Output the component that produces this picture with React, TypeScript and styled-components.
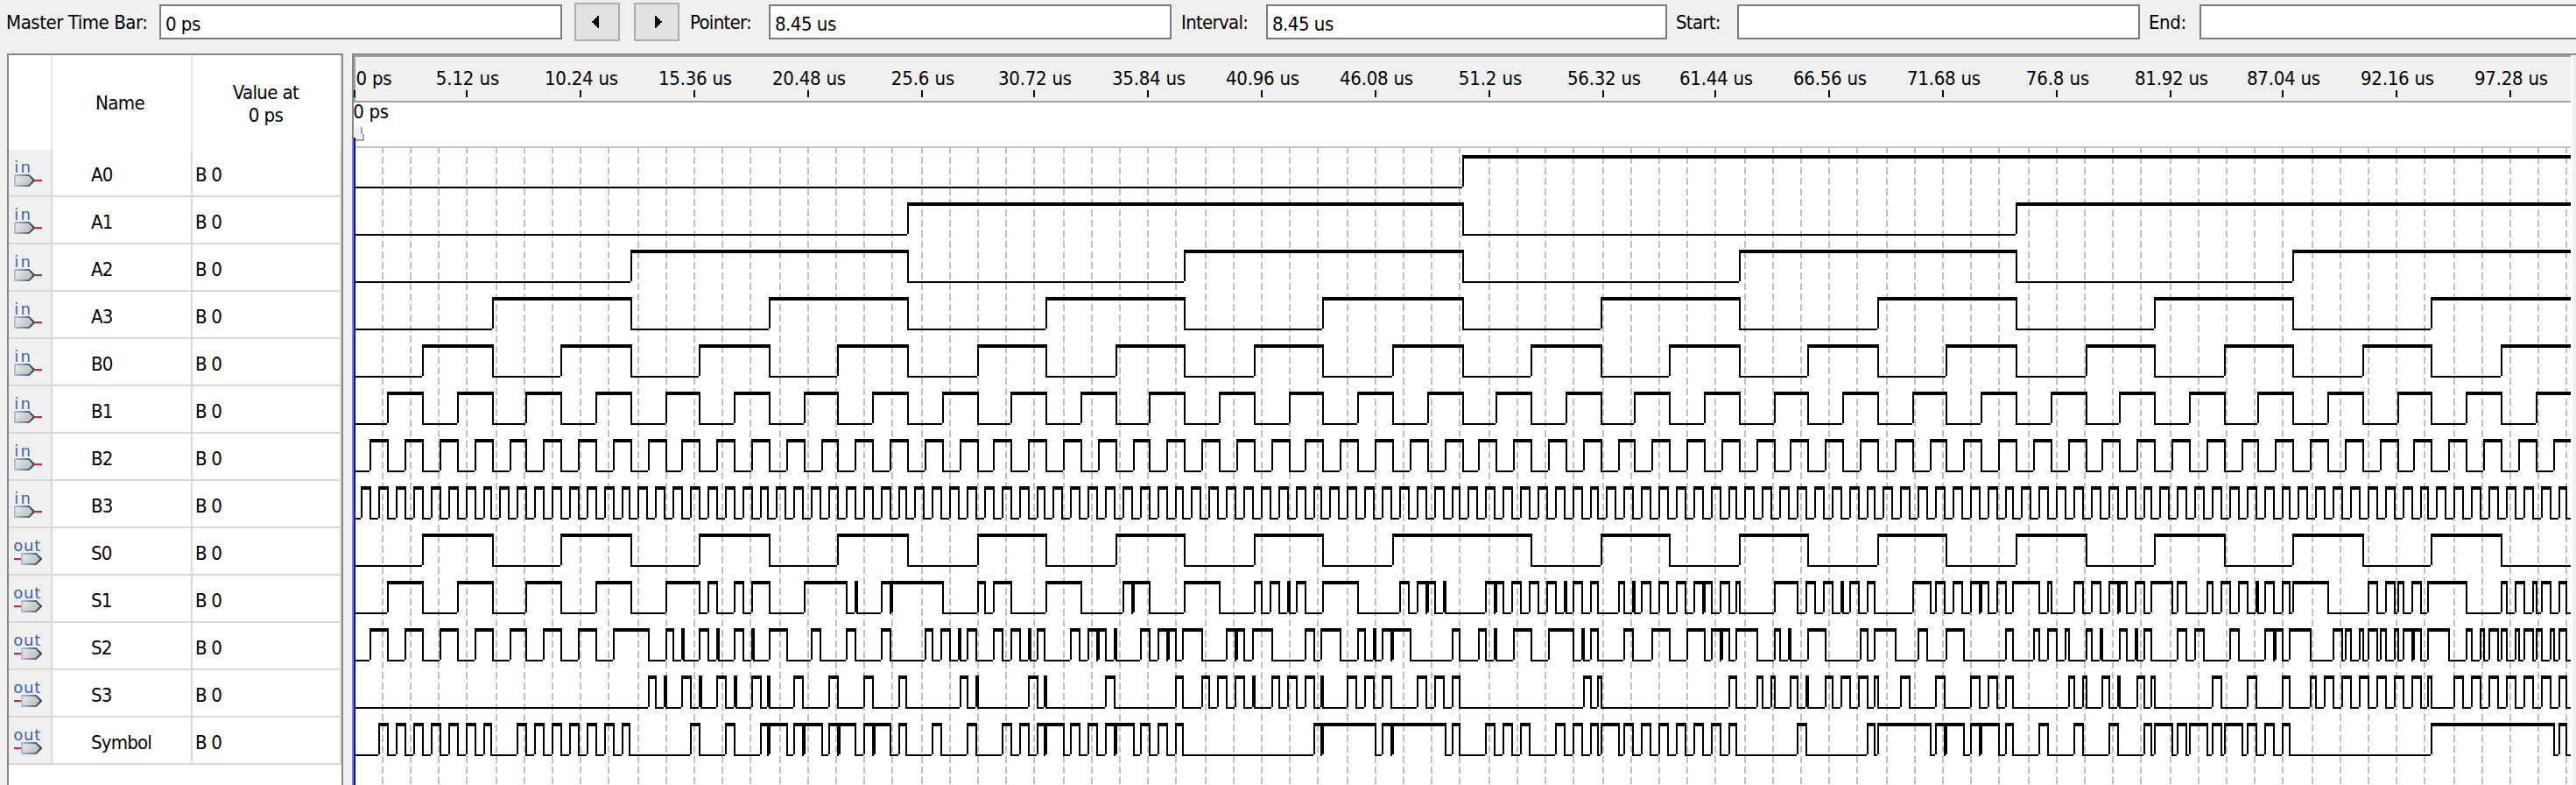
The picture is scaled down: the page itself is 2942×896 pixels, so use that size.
import React from "react";
import styled, { createGlobalStyle } from "styled-components";

const FONT = '"DejaVu Sans Condensed", "DejaVu Sans", "Noto Sans", sans-serif';

const GlobalStyle = createGlobalStyle`
  body { margin: 0; background: #f0f0f0; }
  * { box-sizing: border-box; }
`;

/* ---------- signal data (edges in canvas units, signals start low) ---------- */

const PX_PER_US = 12.6601;
const ORIGIN = 202;
const END = 1468;
const at = (us: number) => Math.floor(ORIGIN + us * PX_PER_US);

const clock = (half: number): number[] => {
  const edges: number[] = [];
  for (let k = 1; at(k * half) < END - 1; k++) edges.push(at(k * half));
  return edges;
};

const s0 = (): number[] => clock(3.125).filter((x) => x !== at(50));

const S1 = [
  221, 241, 261, 281, 300, 320, 340, 360, 380, 399, 404, 409,
  419, 424, 429, 439, 459, 483, 488, 489, 503, 508, 509, 538, 558, 562, 567, 577, 597, 617,
  641, 646, 647, 656, 676, 696, 716, 720, 725, 730, 735, 736, 740, 745, 755, 775, 799, 804,
  809, 814, 815, 819, 824, 825,
  848, 853, 854, 858, 863, 868, 873, 878, 883, 888, 893, 894, 898, 903, 908, 912, 924, 927,
  932, 933, 937, 942, 947, 952, 957, 962, 967, 972, 973, 977, 982, 987, 991, 993, 1013, 1026,
  1031, 1036, 1041, 1046, 1051, 1052, 1056, 1061, 1066, 1070, 1092, 1102, 1105, 1110, 1115,
  1120, 1125, 1130, 1131, 1135, 1140, 1145, 1149, 1164, 1169, 1171, 1184, 1189, 1194, 1199,
  1204, 1209, 1210, 1214, 1219, 1224, 1228, 1240, 1243, 1248,
  1260, 1263, 1268, 1273, 1278, 1283, 1288, 1289, 1293, 1298, 1303, 1307, 1309, 1329, 1352,
  1357, 1362, 1367, 1369, 1372, 1377, 1382, 1386, 1408, 1428, 1431, 1436, 1441, 1446, 1448,
  1451, 1456, 1461, 1465,
];

const S2 = [
  211, 221, 231, 241, 251, 261, 271, 281, 291, 300, 310, 320, 330, 340, 350, 370, 380, 384,
  389, 390, 399, 404, 409, 410,
  419, 424, 429, 430, 439, 449, 463, 468, 483, 488, 503, 508, 528, 532, 537, 542, 547, 548,
  552, 557, 567, 572, 577, 582, 587, 588, 592, 596, 611, 616,
  621, 626, 627, 631, 636, 637, 651, 656, 661, 666, 667, 671, 675, 686, 700, 705, 706, 710,
  715, 726, 745, 750, 754, 765, 775, 779, 784, 785, 789, 794, 795, 805, 829, 833,
  844, 848, 853, 854, 864, 874, 884, 898, 903, 904, 908, 912, 927, 932, 943, 953, 963, 973,
  977, 982, 983, 987, 991, 1003, 1013, 1016, 1021, 1022, 1032, 1042,
  1062, 1066, 1070, 1082, 1095, 1100, 1111, 1121, 1145, 1149, 1161, 1164, 1169, 1174, 1179,
  1181, 1191, 1194, 1199, 1200, 1210, 1214, 1219, 1220, 1224, 1228, 1243, 1248,
  1253, 1258, 1273, 1278, 1293, 1298, 1299, 1303, 1307, 1319, 1332, 1337, 1339, 1342, 1347,
  1349, 1352, 1357, 1359, 1362, 1367, 1369, 1372, 1377, 1378, 1382, 1386, 1398, 1408, 1411,
  1416, 1418, 1421, 1426, 1428, 1431, 1436, 1438, 1441, 1446, 1448, 1451, 1456, 1458, 1461,
  1465,
];

const S3 = [
  370, 374, 379, 380, 389, 394, 399, 400, 409, 414, 419, 420, 429, 434, 438, 439, 453, 458,
  473, 478, 493, 498, 513, 517, 548, 552, 557, 558, 587, 592, 596, 597,
  631, 636, 671, 675, 686, 690, 695, 700, 705, 710, 715, 716, 726, 730, 735, 740, 745, 750,
  754, 755, 769, 774, 779, 784, 789, 794, 809, 814, 819, 824, 829, 833,
  904, 908, 912, 914, 987, 991, 1003, 1006, 1011, 1013, 1022, 1026, 1031, 1032,
  1042, 1046, 1051, 1056, 1061, 1066, 1070, 1072, 1085, 1090, 1105, 1110, 1125, 1130, 1135,
  1140, 1145, 1149, 1181, 1184, 1189, 1191, 1200, 1204, 1209, 1210, 1220, 1224, 1228, 1230,
  1263, 1268, 1283, 1288, 1303, 1307, 1319, 1322, 1327, 1332, 1337, 1342, 1347, 1352, 1357,
  1362, 1367, 1372, 1377, 1382, 1386, 1388, 1401, 1406, 1411, 1416, 1421, 1426, 1431, 1436,
  1441, 1446, 1451, 1456, 1461, 1465,
];

const SYMBOL = [
  216, 221, 226, 231, 236, 241, 246, 251, 256, 261, 266, 271, 276, 280, 295, 300, 305, 310,
  315, 320, 325, 330, 335, 340, 345, 350, 355, 359, 394, 399,
  414, 419, 434, 438, 439, 449, 453, 458, 459, 469, 473, 478, 479, 488, 493, 498, 499, 508,
  513, 517, 532, 537, 552, 557, 572, 577, 582, 587, 592, 596, 597, 607, 611, 616,
  621, 626, 631, 636, 637, 647, 651, 656, 661, 666, 671, 675, 750, 754, 755, 785, 789, 794,
  795, 825, 829, 833,
  848, 853, 858, 863, 868, 873, 888, 893, 898, 903, 908, 912, 914, 924, 927, 932, 937, 942,
  947, 952, 957, 962, 967, 972, 977, 982, 987, 991, 1026, 1031,
  1066, 1070, 1072, 1102, 1105, 1110, 1111, 1121, 1125, 1130, 1131, 1141, 1145, 1149, 1164,
  1169, 1184, 1189, 1204, 1209, 1224, 1228, 1230, 1240, 1243, 1248,
  1250, 1260, 1263, 1268, 1270, 1280, 1283, 1288, 1293, 1298, 1303, 1307, 1388, 1458, 1461,
  1465,
];

type Kind = "in" | "out";
interface Signal {
  name: string;
  kind: Kind;
  edges: number[];
}

const SIGNALS: Signal[] = [
  { name: "A0", kind: "in", edges: clock(50) },
  { name: "A1", kind: "in", edges: clock(25) },
  { name: "A2", kind: "in", edges: clock(12.5) },
  { name: "A3", kind: "in", edges: clock(6.25) },
  { name: "B0", kind: "in", edges: clock(3.125) },
  { name: "B1", kind: "in", edges: clock(1.5625) },
  { name: "B2", kind: "in", edges: clock(0.78125) },
  { name: "B3", kind: "in", edges: clock(0.39) },
  { name: "S0", kind: "out", edges: s0() },
  { name: "S1", kind: "out", edges: S1 },
  { name: "S2", kind: "out", edges: S2 },
  { name: "S3", kind: "out", edges: S3 },
  { name: "Symbol", kind: "out", edges: SYMBOL },
];

const box = (x: number, y: number, w: number, h: number) => `M${x} ${y}h${w}v${h}h${-w}z`;

/* High level is a two-unit bar, low level a one-unit line 18 units below. */
const wavePath = (edges: number[], top: number): string => {
  let d = "";
  let x = ORIGIN + 1;
  let high = false;
  edges.forEach((e) => {
    if (high) d += box(x, top, e - x + 1, 2) + box(e, top, 1, 19);
    else d += box(x, top + 18, e - x, 1) + box(e, top, 1, 18);
    x = e;
    high = !high;
  });
  d += high ? box(x, top, END - x, 2) : box(x, top + 18, END - x, 1);
  return d;
};

/* ---------- layout ---------- */

const Window = styled.div`
  width: 2942px;
  height: 896px;
  overflow: hidden;
  display: flex;
  flex-direction: column;
  background: #f0f0f0;
  color: #000;
  font-family: ${FONT};
  font-size: 22px;
`;

const Toolbar = styled.div`
  flex: none;
  height: 61px;
  padding: 3px 0 0 7px;
  display: flex;
  align-items: flex-start;
  overflow: hidden;
`;

const Label = styled.label<{ $width: number; $gap?: number; $spacing?: number }>`
  flex: none;
  width: ${(p) => p.$width}px;
  margin-left: ${(p) => p.$gap ?? 0}px;
  line-height: 45px;
  white-space: nowrap;
  letter-spacing: ${(p) => p.$spacing ?? -0.7}px;
`;

const Field = styled.div<{ $width?: number }>`
  flex: none;
  width: ${(p) => p.$width ?? 460}px;
  height: 40px;
  margin-top: 2px;
  padding-left: 5px;
  border: 2px solid #7a7a7a;
  background: #fff;
  line-height: 41px;
  letter-spacing: -0.5px;
`;

const StepButton = styled.button<{ $gap: number }>`
  flex: none;
  width: 52px;
  height: 44px;
  margin: 0 0 0 ${(p) => p.$gap}px;
  padding: 0;
  border: 2px solid #adadad;
  background: #e1e1e1;
  display: flex;
  align-items: center;
  justify-content: center;
`;

const Body = styled.div`
  flex: 1;
  min-height: 0;
  display: flex;
  padding-left: 8px;
  gap: 10px;
`;

const Table = styled.div`
  flex: none;
  width: 384px;
  border: 2px solid #828790;
  border-bottom: 0;
  background: #fff;
`;

const HeaderRow = styled.div`
  display: grid;
  grid-template-columns: 50px 160px 170px;
  height: 108px;
`;

const HeaderCell = styled.div<{ $top?: number; $right?: number }>`
  border-right: 2px solid #e5e5e5;
  padding: ${(p) => p.$top ?? 0}px ${(p) => p.$right ?? 0}px 0 0;
  display: flex;
  align-items: center;
  justify-content: center;
  text-align: center;
  line-height: 26px;
  letter-spacing: -0.6px;
`;

const SignalRow = styled.div`
  display: grid;
  grid-template-columns: 50px 160px 170px;
  height: 54px;
`;

const Cell = styled.div<{ $pad: number; $shade?: boolean }>`
  border-right: 2px solid #d8d8d8;
  border-bottom: 2px solid #d8d8d8;
  padding-left: ${(p) => p.$pad}px;
  background: ${(p) => (p.$shade ? "#f0f0f0" : "#fff")};
  line-height: 57px;
  letter-spacing: -0.8px;
  white-space: nowrap;
  overflow: hidden;
`;

const PinSvg = styled.svg`
  display: block;
  margin-top: 12px;
  overflow: visible;
`;

const WavePanel = styled.div`
  flex: none;
  width: 2540px;
  border-left: 2px solid #828790;
  border-top: 2px solid #828790;
  background: #fff;
`;

const WaveSvg = styled.svg`
  display: block;
`;

const ArrowSvg = styled.svg<{ $shift: number }>`
  margin-left: ${(p) => p.$shift}px;
`;

/* ---------- parts ---------- */

const PinIcon = ({ kind }: { kind: Kind }) => {
  const x = kind === "in" ? 0 : 4;
  return (
    <PinSvg width="32" height="32" viewBox="0 0 16 16">
      <text x={kind === "in" ? 0.1 : -0.4} y="7" fontFamily='"DejaVu Sans", sans-serif' fontSize="9"
        textLength={kind === "in" ? 8.6 : 14.8} fill="#3f5fbf">
        {kind}
      </text>
      <path d={`M${x + 0.5} 8.5h8l3 3l-3 3h-8z`} fill="url(#pinFill)" stroke="url(#pinEdge)" strokeWidth="1" />
      <path d={kind === "in" ? "M12 11h4v1h-4z" : "M0 11h4v1h-4z"} fill="#ee1c24" />
    </PinSvg>
  );
};

const IconPaints = () => (
  <defs>
    <linearGradient id="pinFill" x1="0" y1="0" x2="1" y2="0.4">
      <stop offset="0" stopColor="#ececea" />
      <stop offset="1" stopColor="#bdbdbb" />
    </linearGradient>
    <linearGradient id="pinEdge" x1="0" y1="0" x2="1" y2="0">
      <stop offset="0" stopColor="#aebfdf" />
      <stop offset="0.5" stopColor="#7387a4" />
      <stop offset="1" stopColor="#1f3a50" />
    </linearGradient>
  </defs>
);

const ARROWS = {
  left: "M3 0h1v7h-1v-1h-1v-1h-1v-1h-1v-1h1v-1h1v-1h1z",
  right: "M1 0h-1v7h1v-1h1v-1h1v-1h1v-1h-1v-1h-1v-1h-1z",
};

const Arrow = ({ dir }: { dir: "left" | "right" }) => (
  <ArrowSvg width="8" height="14" viewBox="0 0 4 7" shapeRendering="crispEdges"
    $shift={dir === "left" ? -4 : 4}>
    <path d={ARROWS[dir]} />
  </ArrowSvg>
);

const TICKS = Array.from({ length: 20 }, (_, i) => i);
const GRID = Array.from({ length: 78 }, (_, i) => i + 1);

const tickLabel = (i: number) => (i === 0 ? "0 ps" : `${Number((i * 5.12).toFixed(2))} us`);
const labelWidth = (text: string) =>
  text.length === 4 ? 20.6 : 42 - (8 - text.length) * 5.7;

const Waveforms = () => (
  <WaveSvg width="2538" height="833" viewBox="202 0 1269 416.5" fontFamily={FONT} fontSize="11">
    <IconPaints />
    <g shapeRendering="crispEdges">
      <rect x="202" y="0" width="1266" height="26" fill="#f0f0f0" />
      <path d="M202 0h1266v1h-1265v25h-1z M202 26h1266v1h-1266z" fill="#a0a0a0" />
      <rect x="202" y="52" width="1266" height="1" fill="#c0c0c0" />
      {GRID.map((k) => (
        <line key={k} x1={at(k * 1.28) + 0.5} x2={at(k * 1.28) + 0.5} y1="52" y2="416.5"
          stroke="#c0c0c0" strokeDasharray="4 2" />
      ))}
      {TICKS.map((i) => (
        <rect key={i} x={at(i * 5.12)} y="20" width="1" height="4" />
      ))}
      {SIGNALS.map((s, i) => (
        <path key={s.name} d={wavePath(s.edges, 57 + i * 27)} />
      ))}
      <rect x="202" y="41" width="4" height="7" fill="#f0f0f0" />
      <path d="M206 41h1v4h-1z M207 45h1v4h-5v-1h4z" fill="#a0a0a0" />
      <rect x="202" y="47" width="1" height="370" fill="#0000ff" />
      <rect x="1469" y="0" width="2" height="417" fill="#f0f0f0" />
    </g>
    {TICKS.map((i) => {
      const text = tickLabel(i);
      const w = labelWidth(text);
      const x = i === 0 ? 203.2 : at(i * 5.12) + 1 - w / 2;
      return (
        <text key={i} x={x} y="17" textLength={w}>
          {text}
        </text>
      );
    })}
    <text x="201.6" y="36" textLength="20.4">
      0 ps
    </text>
  </WaveSvg>
);

export default function App() {
  return (
    <Window>
      <GlobalStyle />
      <Toolbar>
        <Label $width={175} $spacing={-0.45}>Master Time Bar:</Label>
        <Field>0 ps</Field>
        <StepButton $gap={14} aria-label="Previous transition">
          <Arrow dir="left" />
        </StepButton>
        <StepButton $gap={16} aria-label="Next transition">
          <Arrow dir="right" />
        </StepButton>
        <Label $width={90} $gap={12}>Pointer:</Label>
        <Field>8.45 us</Field>
        <Label $width={97} $gap={11}>Interval:</Label>
        <Field $width={458}>8.45 us</Field>
        <Label $width={70} $gap={10}>Start:</Label>
        <Field />
        <Label $width={58} $gap={10} $spacing={-0.4}>End:</Label>
        <Field />
      </Toolbar>
      <Body>
        <Table>
          <HeaderRow>
            <HeaderCell />
            <HeaderCell $top={1} $right={4}>Name</HeaderCell>
            <HeaderCell $top={3} $right={1}>
              Value at
              <br />0 ps
            </HeaderCell>
          </HeaderRow>
          {SIGNALS.map((s) => (
            <SignalRow key={s.name}>
              <Cell $pad={6} $shade>
                <PinIcon kind={s.kind} />
              </Cell>
              <Cell $pad={44}>{s.name}</Cell>
              <Cell $pad={3}>B 0</Cell>
            </SignalRow>
          ))}
        </Table>
        <WavePanel>
          <Waveforms />
        </WavePanel>
      </Body>
    </Window>
  );
}
